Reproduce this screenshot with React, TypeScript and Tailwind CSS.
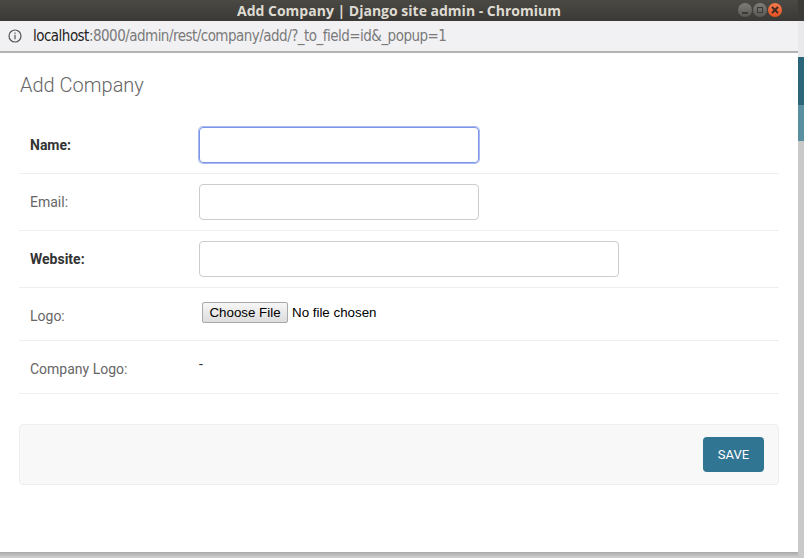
import React from "react";

const roboto = { fontFamily: "Roboto, 'Liberation Sans', sans-serif" };

function Row({
  label,
  bold,
  h,
  children,
}: {
  label: string;
  bold?: boolean;
  h: string;
  children: React.ReactNode;
}) {
  return (
    <div className="flex border-b border-[#eeeeee] px-[11px] py-[10px]">
      <div
        className={`w-[169px] shrink-0 pt-[8px] text-[14px] leading-[20px] ${
          bold ? "font-bold text-[#333333]" : "text-[#666666]"
        }`}
      >
        {label}
      </div>
      <div className={`${h} flex-1`}>{children}</div>
    </div>
  );
}

export default function App() {
  return (
    <div className="flex h-[558px] w-[804px] overflow-hidden bg-[#cfcfcf]" style={roboto}>
      <div className="flex h-[558px] w-[798px] shrink-0 flex-col">
        {/* title bar */}
        <div className="relative flex h-[21px] shrink-0 items-center justify-center bg-gradient-to-b from-[#4a4944] to-[#3a3935]">
          <span
            className="text-[14px] font-bold leading-none tracking-[0px] text-[#dfdbd2]"
            style={{ fontFamily: "'Open Sans', 'Liberation Sans', sans-serif" }}
          >
            Add Company | Django site admin - Chromium
          </span>
          <div className="absolute right-[16px] top-[3px] flex gap-[1px]">
            <div className="flex h-[14px] w-[14px] items-center justify-center rounded-full bg-gradient-to-b from-[#807d78] to-[#5a5854]">
              <div className="mt-[5px] h-[2px] w-[6px] bg-[#3c3b37]" />
            </div>
            <div className="flex h-[14px] w-[14px] items-center justify-center rounded-full bg-gradient-to-b from-[#807d78] to-[#5a5854]">
              <div className="h-[6px] w-[6px] border-[1.5px] border-[#3c3b37]" />
            </div>
            <div className="flex h-[14px] w-[14px] items-center justify-center rounded-full bg-gradient-to-b from-[#f37a4e] to-[#e2501c]">
              <svg width="8" height="8" viewBox="0 0 8 8">
                <path d="M1 1L7 7M7 1L1 7" stroke="#3c2a22" strokeWidth="1.8" />
              </svg>
            </div>
          </div>
        </div>
        {/* address bar */}
        <div className="flex h-[32px] shrink-0 items-center border-b-2 border-[#b3b3b3] bg-[#f1f1f3] pl-[8px]">
          <svg width="14" height="14" viewBox="0 0 14 14" className="mr-[11px]">
            <circle cx="7" cy="7" r="6" fill="none" stroke="#555" strokeWidth="1.2" />
            <rect x="6.4" y="5.8" width="1.2" height="4.5" fill="#555" />
            <rect x="6.4" y="3.5" width="1.2" height="1.3" fill="#555" />
          </svg>
          <span
            className="text-[15px] leading-none text-[#7a7a7a]"
            style={{ fontFamily: "'DejaVu Sans Condensed', 'Liberation Sans', sans-serif", letterSpacing: "-0.52px" }}
          >
            <span className="text-[#222]">localhost</span>:8000/admin/rest/company/add/?_to_field=id&amp;_popup=1
          </span>
        </div>
        {/* content */}
        <div className="flex-1 bg-white px-[19px] pt-[20px]">
          <h1 className="pl-[1px] text-[20px] font-light leading-[24px] text-[#666666]">Add Company</h1>
          <div className="mt-[20px]">
            <Row label="Name:" bold h="h-[36px]">
              <div className="h-[36px] w-[280px] rounded-[4px] border border-[#7d95e6] shadow-[0_0_0_1px_#a9b9f1]" />
            </Row>
            <Row label="Email:" h="h-[36px]">
              <div className="h-[36px] w-[280px] rounded-[4px] border border-[#cccccc]" />
            </Row>
            <Row label="Website:" bold h="h-[36px]">
              <div className="h-[36px] w-[420px] rounded-[4px] border border-[#cccccc]" />
            </Row>
            <Row label="Logo:" h="h-[32px]">
              <div
                className="flex items-center pl-[3px] pt-[4px] text-[13.33px] text-black"
                style={{ fontFamily: "'Liberation Sans', Arial, sans-serif" }}
              >
                <div className="flex h-[21px] w-[86px] items-center justify-center rounded-[2px] border border-[#a9a9a9] bg-gradient-to-b from-[#f6f6f6] to-[#dddddd] leading-none">
                  Choose File
                </div>
                <span className="ml-[4px] leading-none">No file chosen</span>
              </div>
            </Row>
            <Row label="Company Logo:" h="h-[32px]">
              <div className="pt-[3px] text-[14px] leading-[20px] text-[#333]">-</div>
            </Row>
          </div>
          <div className="mt-[30px] flex h-[61px] items-center justify-end rounded-[4px] border border-[#eeeeee] bg-[#f8f8f8] px-[14px]">
            <div className="flex h-[35px] w-[61px] items-center justify-center rounded-[4px] bg-[#307592] text-[13px] text-white">
              SAVE
            </div>
          </div>
        </div>
        <div className="h-[6px] shrink-0 bg-gradient-to-b from-[#a9a9a9] to-[#d2d2d2]" />
      </div>
      {/* background strip */}
      <div className="flex w-[6px] shrink-0 flex-col">
        <div className="h-[21px] bg-[#3c3b37]" />
        <div className="h-[36px] bg-[#e9e9eb]" />
        <div className="h-[48px] bg-[#2a6579]" />
        <div className="h-[36px] bg-[#5a8fa0]" />
        <div className="flex-1 bg-[#c9c9c9]" />
      </div>
    </div>
  );
}
